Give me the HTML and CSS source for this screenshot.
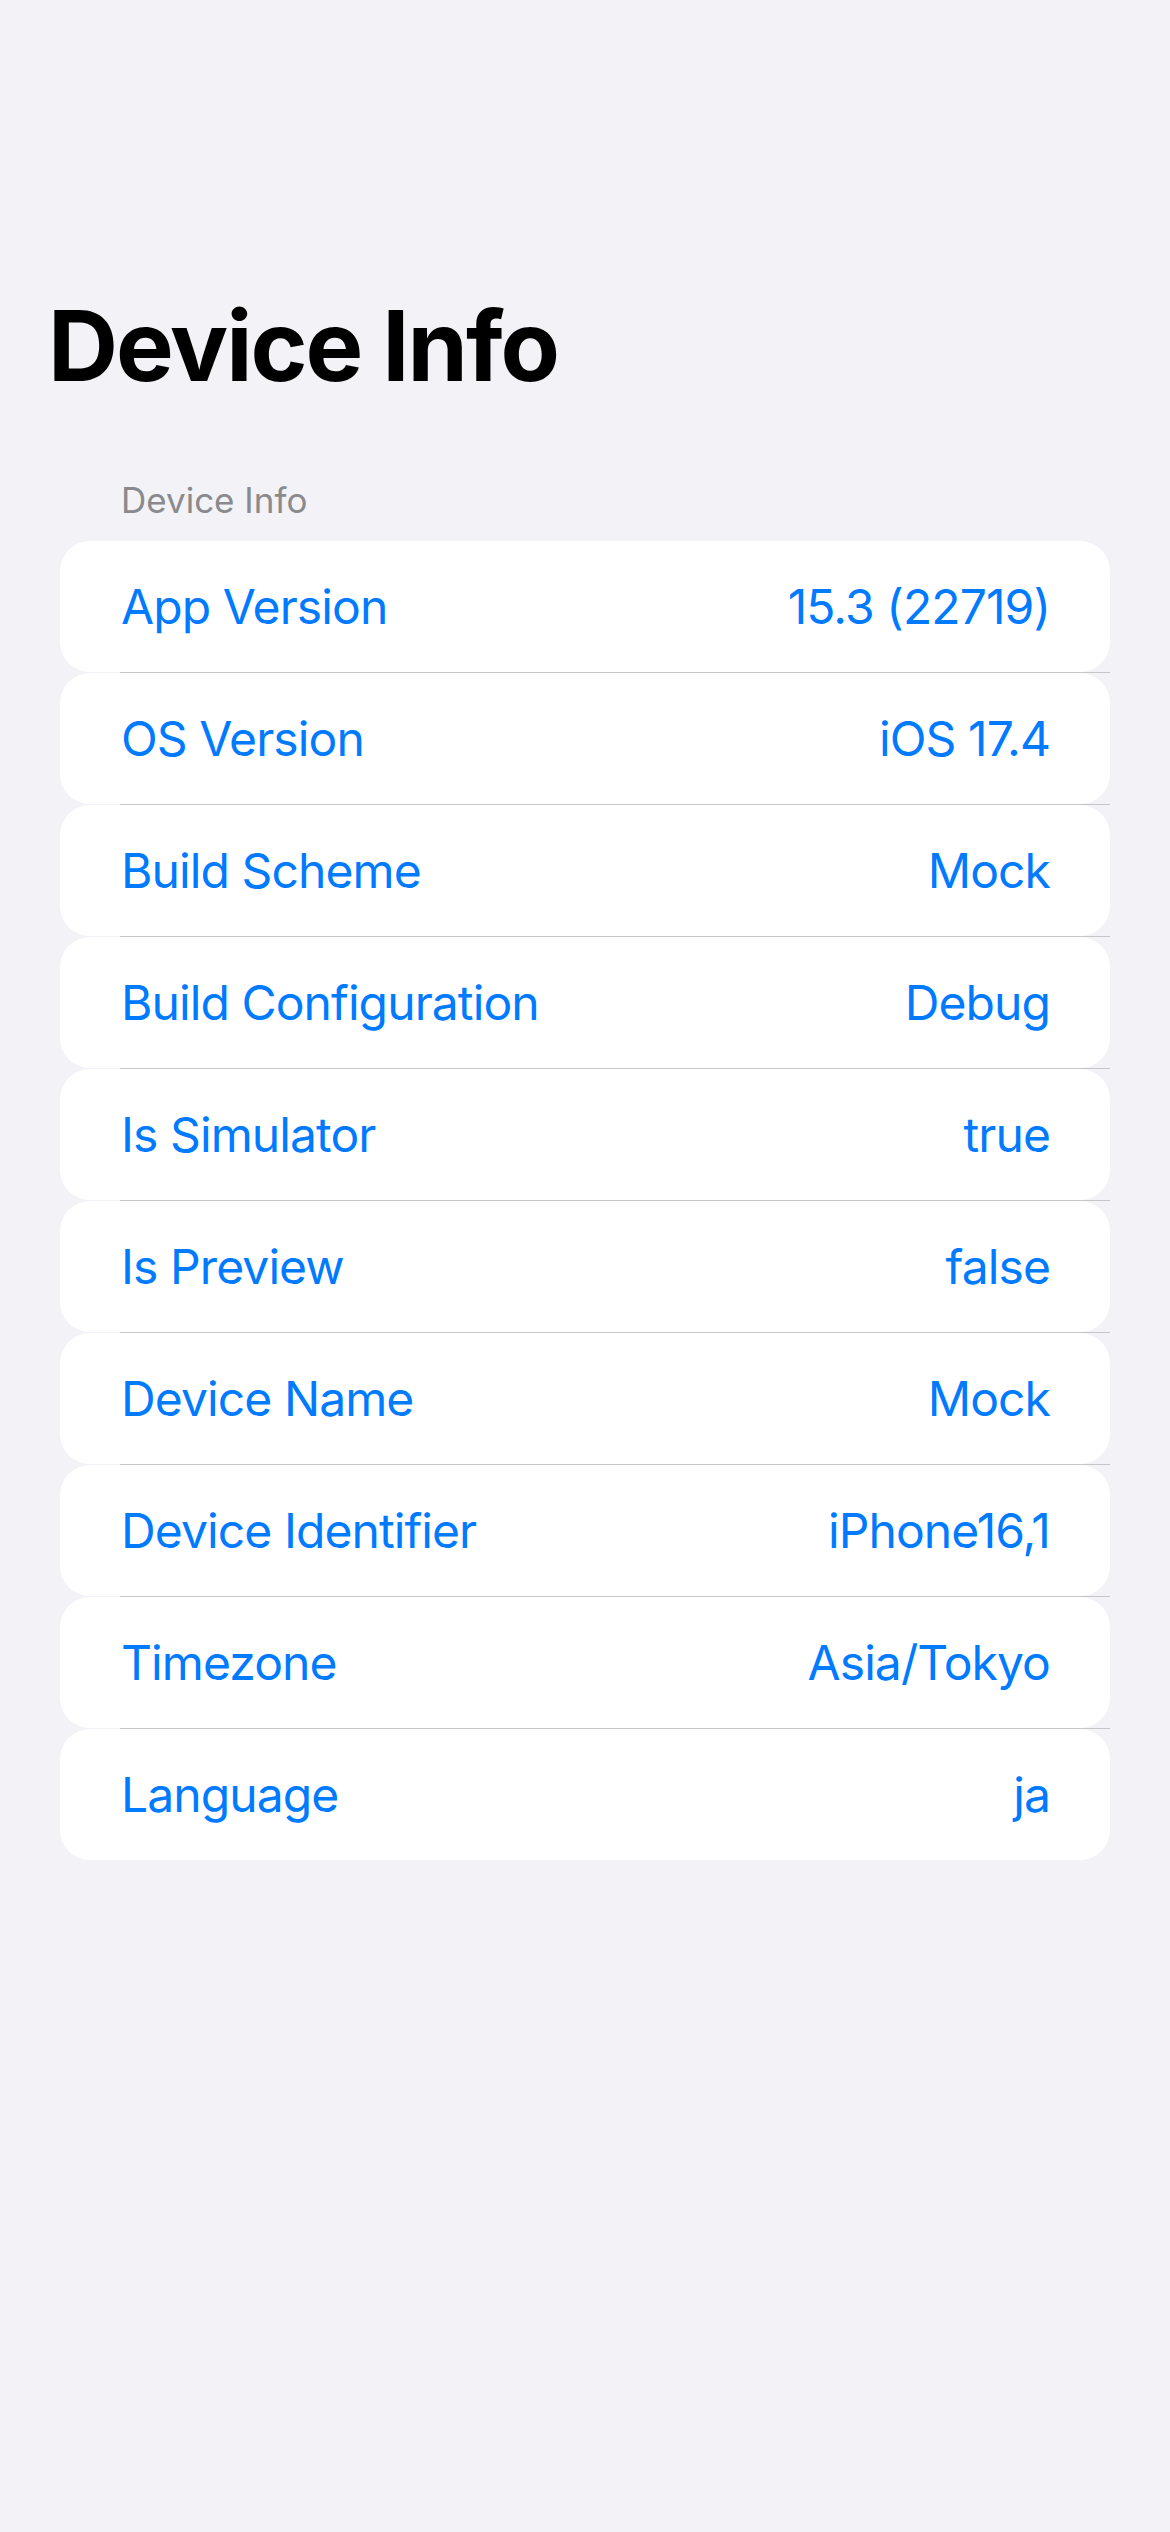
FILE: index.html
```html
<!DOCTYPE html>
<html lang="en">
<head>
<meta charset="utf-8">
<title>Device Info</title>
<link rel="stylesheet" href="styles.css">
</head>
<body>
<main class="screen">
  <h1 class="large-title">Device Info</h1>
  <section class="group">
    <h2 class="group-header">Device Info</h2>
    <ul class="rows">
      <li class="row"><div class="cell"><span class="label">App Version</span><span class="value">15.3 (22719)</span></div></li>
      <li class="row"><div class="cell"><span class="label">OS Version</span><span class="value">iOS 17.4</span></div></li>
      <li class="row"><div class="cell"><span class="label">Build Scheme</span><span class="value">Mock</span></div></li>
      <li class="row"><div class="cell"><span class="label">Build Configuration</span><span class="value">Debug</span></div></li>
      <li class="row"><div class="cell"><span class="label">Is Simulator</span><span class="value">true</span></div></li>
      <li class="row"><div class="cell"><span class="label">Is Preview</span><span class="value">false</span></div></li>
      <li class="row"><div class="cell"><span class="label">Device Name</span><span class="value">Mock</span></div></li>
      <li class="row"><div class="cell"><span class="label">Device Identifier</span><span class="value">iPhone16,1</span></div></li>
      <li class="row"><div class="cell"><span class="label">Timezone</span><span class="value">Asia/Tokyo</span></div></li>
      <li class="row"><div class="cell"><span class="label">Language</span><span class="value">ja</span></div></li>
    </ul>
  </section>
</main>
</body>
</html>
```

FILE: styles.css
```css
html, body {
  margin: 0;
  padding: 0;
  background: #f2f2f7;
}

body {
  font-family: Inter, "Noto Sans", "Liberation Sans", sans-serif;
  min-height: 2532px;
}

.screen {
  display: flex;
  flex-direction: column;
  padding-top: 297px;
}

.large-title {
  margin: 0;
  padding-left: 48px;
  font-size: 97px;
  line-height: 1;
  font-weight: 700;
  color: #000;
  letter-spacing: -2px;
}

.group {
  display: flex;
  flex-direction: column;
  margin-top: 89px;
}

.group-header {
  margin: 0 0 0 121px;
  font-size: 35px;
  line-height: 1;
  font-weight: 400;
  color: #8a8a8e;
}

.rows {
  list-style: none;
  margin: 23px 60px 0 60px;
  padding: 0;
  display: flex;
  flex-direction: column;
}

.row:not(:last-child)::after {
  content: "";
  display: block;
  height: 1px;
  margin-left: 60px;
  background: #c6c6c8;
}

.cell {
  height: 131px;
  background: #fff;
  border-radius: 30px;
  display: flex;
  align-items: center;
  justify-content: space-between;
  padding: 0 60px 0 61px;
  font-size: 48px;
  line-height: 1;
  letter-spacing: -0.9px;
  color: #007aff;
}

.label, .value {
  white-space: nowrap;
}
```
